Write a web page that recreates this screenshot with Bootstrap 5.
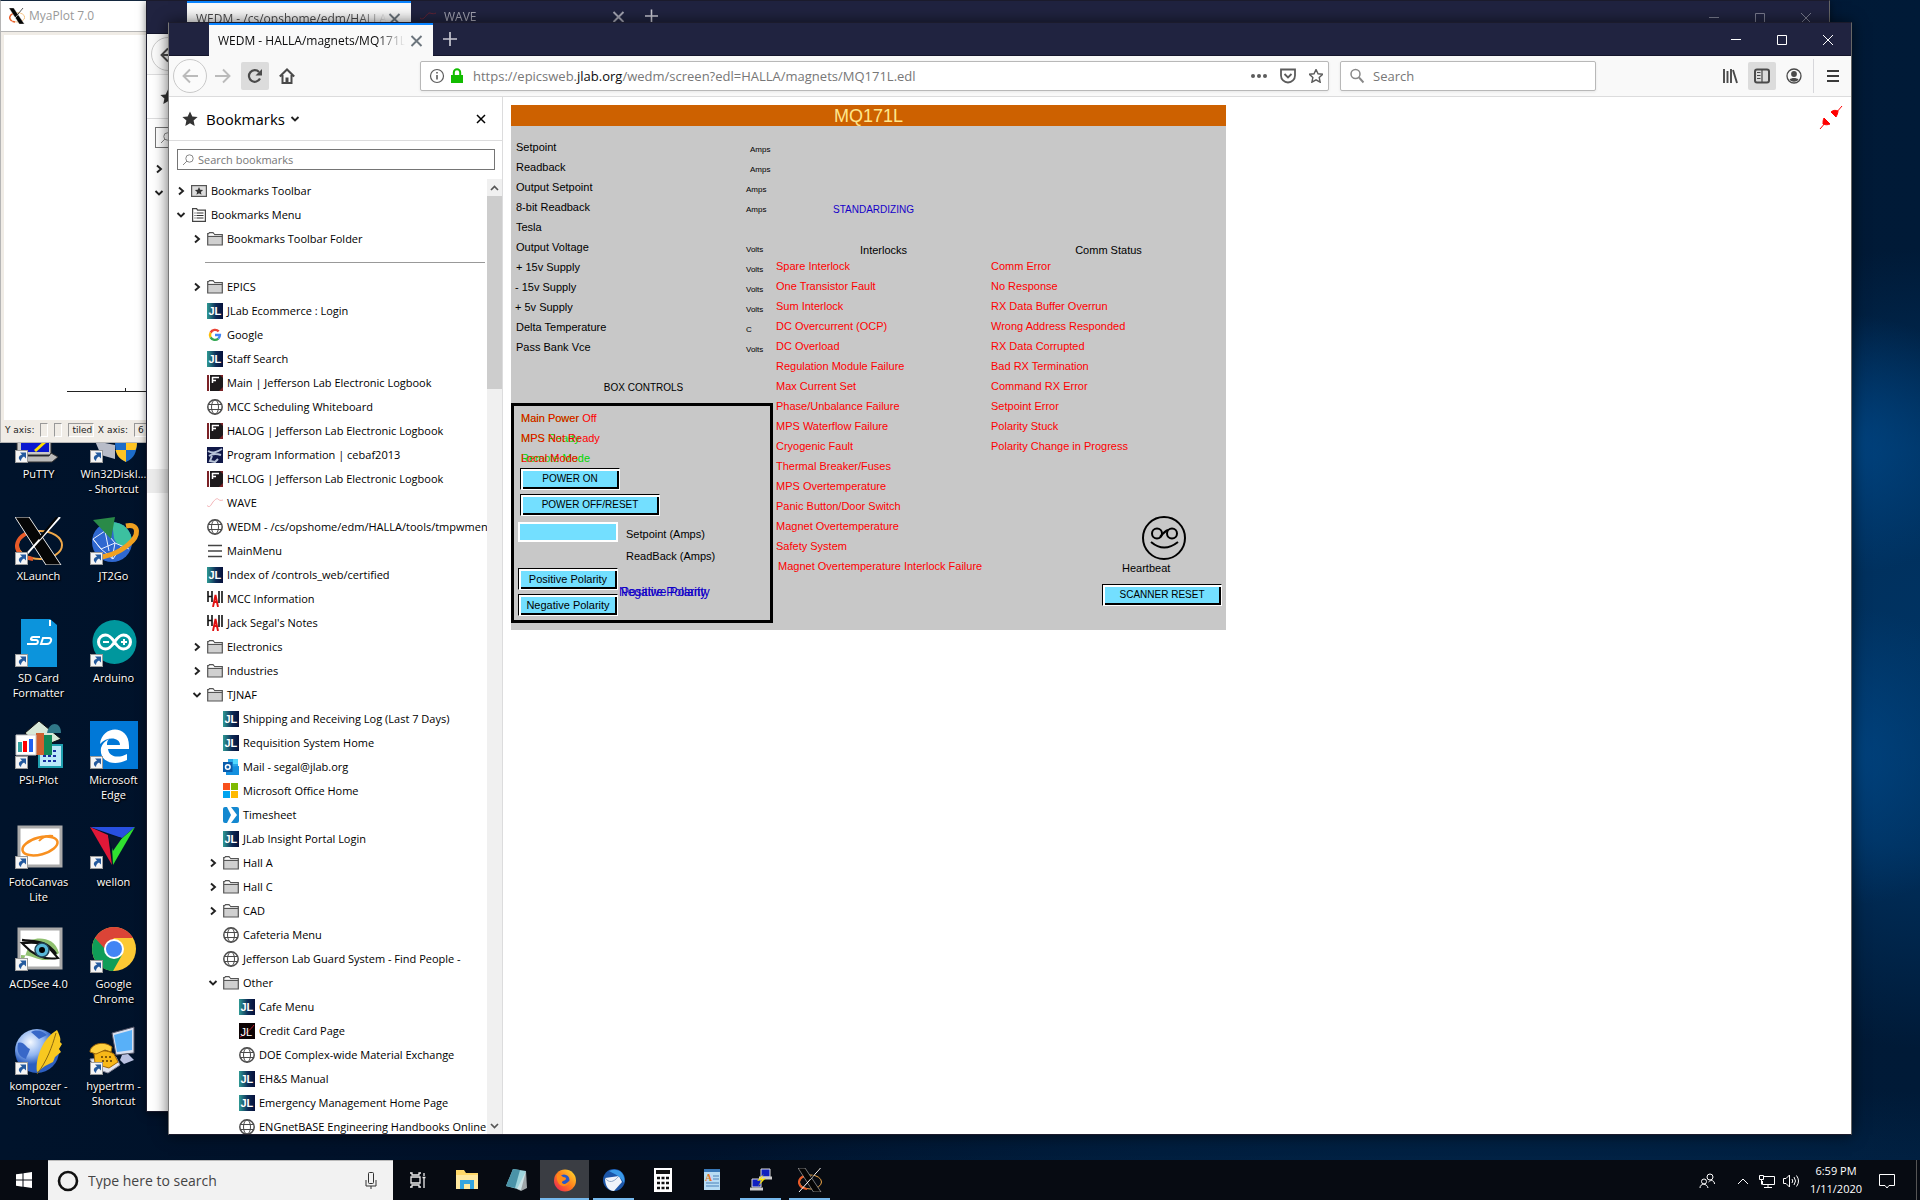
<!DOCTYPE html>
<html lang="en">
<head>
<meta charset="utf-8">
<meta name="viewport" content="width=device-width, initial-scale=1">
<title>WEDM - HALLA/magnets/MQ171L</title>
<link href="https://cdn.jsdelivr.net/npm/bootstrap@5.3.0/dist/css/bootstrap.min.css" rel="stylesheet">
<style>
  :root { --ui: "Open Sans", "Noto Sans", sans-serif; --edm: "Liberation Sans", Arial, sans-serif; }
  body { font-family: var(--ui); font-size: 11px; line-height: 16px; color: #000; }
  button { font: inherit; color: inherit; }
  .desktop {
    height: 100vh; overflow: hidden; position: relative;
    background:
      radial-gradient(ellipse 160px 130px at 96% 37%, rgba(0,74,140,.75) 0, rgba(0,74,140,0) 100%),
      radial-gradient(ellipse 160px 150px at 96% 63%, rgba(0,74,140,.7) 0, rgba(0,74,140,0) 100%),
      radial-gradient(ellipse 320px 400px at 100% 54%, #003362 0, #002f5c 50%, rgba(0,47,92,0) 100%),
      radial-gradient(ellipse 900px 120px at 80% 100%, rgba(2,42,82,.8) 0, rgba(2,42,82,0) 100%),
      linear-gradient(90deg, #00132b 0, #001129 30%, #001834 60%, #001a37 100%);
  }
  .no-ui { background: none; border: 0; padding: 0; }

  /* desktop shortcuts */
  .shortcuts { display: grid; grid-template-columns: 75px 75px; grid-auto-rows: 102px; padding: 415px 0 0 1px; width: 151px; }
  .shortcut { color: #fff; text-decoration: none; text-align: center; line-height: 15px; text-shadow: 0 1px 2px #000, 1px 1px 1px #000; position: relative; white-space: nowrap; }
  .shortcut svg { display: block; margin: 0 auto 3px; overflow: visible; }

  /* windows */
  .win { position: absolute; display: flex; flex-direction: column; overflow: hidden; }
  .plotwin { left: 0; top: 0; width: 148px; height: 443px; background: #f0ece6; border: 1px solid #b5b5b5; border-top: 1px solid #14283f; }
  .plot-title { height: 31px; background: #fff; color: #999; font-size: 12px; border-bottom: 1px solid #b5b5b5; }
  .plot-area { margin: 3px 0 0 3px; background: #fff; }
  .plot-status { height: 22px; padding-bottom: 2px; font-family: "DejaVu Sans", sans-serif; font-size: 9px; line-height: 12px; color: #222; white-space: nowrap; overflow: hidden; }
  .sunk { border: 1px solid #999; border-right-color: #fff; border-bottom-color: #fff; height: 14px; min-width: 7px; padding: 0 3px; margin-left: 2px; }
  .ff { background: #fff; border: 1px solid #1b1b2c; border-right-color: #666; }
  .ff-back { left: 146px; right: 90px; top: 0; bottom: 88px; box-shadow: 0 2px 8px rgba(0,0,0,.5); }
  .ff-front { left: 168px; right: 68px; top: 22px; bottom: 65px; box-shadow: 0 0 14px rgba(0,0,0,.6); border-left-color: #777; }
  .titlebar { height: 33px; background: #202340; border-bottom: 1px solid #14162c; color: #d0d0da; flex: none; }
  .tab { width: 224px; height: 33px; padding: 0 8px 0 9px; font-size: 12px; }
  .tab-on { background: #f9f9f9; color: #0c0c0d; border-top: 2px solid #0a84ff; }
  .tab-text { flex: 1; overflow: hidden; white-space: nowrap; -webkit-mask-image: linear-gradient(90deg, #000 85%, transparent); mask-image: linear-gradient(90deg, #000 85%, transparent); }
  .lead-gap { width: 40px; }
  .capbtn { width: 46px; height: 32px; }
  .toolbar { height: 41px; background: #f9f9f9; border-bottom: 1px solid #dcdcdd; flex: none; color: #4a4a4a; }
  .toolbar .faint { color: #bbb; }
  .round-btn { width: 34px; height: 34px; border: 1px solid #c9c9c9; border-radius: 50%; background: #fbfbfb; }
  .tool { width: 28px; height: 28px; border-radius: 2px; }
  .tool-on { background: #dcdcdc; }
  .tight { margin-left: 2px; }
  .field { height: 30px; border: 1px solid #b8b8b8; border-radius: 2px; background: #fff; box-shadow: 0 1px 3px rgba(0,0,0,.08); }
  .field input { border: 0; outline: 0; font-size: 13px; color: #555; background: none; width: 100%; padding: 0; }
  .url { flex: 1; font-size: 13px; color: #777; white-space: nowrap; }
  .url b { font-weight: 400; color: #0c0c0d; }
  .search-field { width: 256px; margin-left: 11px; }
  .spring-l { width: 119px; }
  .spring-r { width: 120px; }
  .vline { width: 1px; height: 34px; background: #d7d7db; margin: 0 1px 0 5px; }

  .side { width: 334px; border-right: 1px solid #dcdcdd; flex: none; }
  .side-head { height: 44px; border-bottom: 1px solid #dcdcdd; font-size: 15px; padding: 0 15px 0 9px; flex: none; }
  .side-search { height: 21px; margin: 8px 7px 9px 8px; border: 1px solid #757575; flex: none; }
  .side-search input { border: 0; outline: 0; background: none; padding: 0 0 0 4px; font-size: 11px; flex: 1; line-height: 17px; }
  .side-search input::placeholder, .field input::placeholder { color: #777; opacity: 1; }
  .tree { list-style: none; margin: 0; padding: 0; overflow: hidden; flex: 1; min-width: 0; }
  .tree li { height: 24px; display: flex; align-items: center; padding-left: 6px; white-space: nowrap; overflow: hidden; }
  .tree .l1 { padding-left: 22px; } .tree .l2 { padding-left: 38px; } .tree .l3 { padding-left: 54px; }
  .tree a { color: #000; text-decoration: none; display: flex; align-items: center; gap: 4px; }
  .tree svg { flex: none; }
  .twisty { width: 12px; height: 12px; margin-right: 4px; display: flex; flex: none; }
  .tree .divide { padding: 0 2px 2px 36px; }
  .divide hr { flex: 1; margin: 0; border-top: 1px solid #999; opacity: 1; }
  .tree .hot { background: #ececec; }
  .scroller { width: 15px; background: #f0f0f0; flex: none; }
  .scroller button { height: 17px; }
  .thumb { height: 193px; background: #cdcdcd; }

  /* control screen */
  .page { padding: 8px; }
  .edm { width: 715px; min-height: 525px; display: flex; flex-direction: column; background: #c8c8c8; font-family: var(--edm); font-size: 11px; line-height: 20px; align-self: flex-start; }
  .edm-title { height: 21px; background: #cd6100; color: #ffe68c; font-size: 18px; line-height: 22px; text-align: center; margin: 0; font-weight: 400; }
  .edm-left { width: 265px; padding-top: 11px; }
  .edm-mid { width: 215px; padding-top: 74px; }
  .edm-right { flex: 1; padding-top: 118px; }
  .caps { font-size: 10px; }
  .sig { height: 20px; padding-left: 5px; }
  .sig .unit { width: 30px; font-size: 8px; padding-top: 3px; }
  .sig .unit-far { width: 26px; }
  .colhead { line-height: 12px; text-align: center; }
  .alarm { color: #f00; white-space: nowrap; }
  .std { color: #1400c8; padding-left: 57px; }
  .ctl-title { padding-top: 21px; }
  .ctl { width: 262px; height: 220px; border: 3px solid #000; margin-top: 5px; padding: 2px 3px 0 4px; }
  .edm-btn { display: block; width: 100px; height: 22px; padding: 0; background: #73dfff; border: 1px solid #000; border-right-color: #fff; border-bottom-color: #fff; border-radius: 0; box-shadow: inset 2px 2px #fff, inset -2px -2px #000; line-height: 18px; color: #000; }
  .w140 { width: 140px; } .w120 { width: 120px; }
  .inset { margin-left: 2px; }
  .stack { position: relative; height: 20px; padding-left: 3px; white-space: nowrap; }
  .stack .under { position: absolute; left: 3px; top: 0; color: #00d800; }
  .stack .over { position: relative; color: #f00; }
  .pol { font-size: 12px; width: 100px; }
  .pol .under { left: 1px; color: #1000c8; } .pol .over { color: #1000c8; }
  .set-row { padding-top: 6px; line-height: 24px; }
  .setbox { width: 100px; height: 20px; border: 2px solid #fff; background: #73dfff; padding: 0; border-radius: 0; }
  .pol-row { padding-top: 2px; }
  .beat { width: 112px; line-height: 16px; }

  /* taskbar */
  .taskbar { position: absolute; left: 0; right: 0; bottom: 0; height: 40px; background: #070b12; color: #fff; }
  .tb { width: 49px; height: 40px; position: relative; display: flex; align-items: center; justify-content: center; }
  .tb-run::after { content: ""; position: absolute; left: 4px; right: 4px; bottom: 0; height: 2px; background: #76b9ed; }
  .tb-on { background: #3a3d43; } .tb-on::after { left: 0; right: 0; }
  .start { width: 48px; }
  .tb-search { width: 345px; height: 40px; background: #f2f2f2; border-top: 1px solid #bbb; }
  .tb-search input { border: 0; outline: 0; background: none; font-size: 14px; flex: 1; padding: 0; }
  .tb-search input::placeholder { color: #444; opacity: 1; }
  .tray { width: 24px; height: 40px; }
  .clock { width: 66px; text-align: center; line-height: 18px; }
  .notif { width: 36px; height: 40px; }
  .peek { width: 1px; height: 40px; background: #555; margin: 0 3px 0 11px; }
</style>
</head>
<body>

<svg width="0" height="0" class="position-absolute" aria-hidden="true">
  <defs>
    <linearGradient id="g-jl"><stop offset="0" stop-color="#2f9a94"/><stop offset=".55" stop-color="#0d2c58"/><stop offset="1" stop-color="#06103a"/></linearGradient>
    <linearGradient id="g-ff" x1="1" y1="0" x2="0" y2="1"><stop offset="0" stop-color="#ffe52e"/><stop offset=".5" stop-color="#ff7b1c"/><stop offset="1" stop-color="#e8185f"/></linearGradient>
    <radialGradient id="g-globe" cx=".35" cy=".3"><stop offset="0" stop-color="#f4f9ff"/><stop offset=".6" stop-color="#8fb4f0"/><stop offset="1" stop-color="#2d5fc0"/></radialGradient>
    <symbol id="closed" viewBox="0 0 12 12"><path d="M4 2.500 8 6 4 9.500" fill="none" stroke="#222" stroke-width="1.900"/></symbol>
    <symbol id="opened" viewBox="0 0 12 12"><path d="M2.500 4 6 7.500 9.500 4" fill="none" stroke="#222" stroke-width="1.900"/></symbol>
    <symbol id="folder" viewBox="0 0 16 16"><path d="M.7 14V2.500h1l.8-1h3.500l1.500 2h7.800V14z" fill="#d0d0d0" stroke="#555" stroke-width="1.200"/><path d="M1 5.500h14.500" stroke="#555"/><path d="M2.500 3h4l1 1.500h-6z" fill="#fff"/></symbol>
    <symbol id="barfolder" viewBox="0 0 16 16"><rect x=".6" y="2.600" width="14.800" height="10.800" fill="#ddd" stroke="#555" stroke-width="1.200"/><path d="m8 4 1.200 2.700 2.900.3-2.200 1.900.6 2.900L8 10.300l-2.500 1.500.6-2.900L3.900 7l2.900-.3z" fill="#333"/></symbol>
    <symbol id="menufolder" viewBox="0 0 16 16"><path d="M1.600 14.400V1.600h4l1 1.500h7.800v11.300z" fill="#fff" stroke="#444" stroke-width="1.200"/><path d="M3.500 6h1m1 0h7M3.500 8.500h1m1 0h7M3.500 11h1m1 0h7" stroke="#333" stroke-width="1.200"/></symbol>
    <symbol id="jl" viewBox="0 0 16 16"><rect width="16" height="16" fill="url(#g-jl)"/><text x="1.500" y="11.500" font-family="Liberation Sans" font-weight="700" font-size="11" fill="#fff">JL</text></symbol>
    <symbol id="jlblack" viewBox="0 0 16 16"><rect width="16" height="16" fill="#0c0304"/><path d="M1 14C6 12 12 6 15 2" stroke="#c0182a" fill="none"/><text x="1.500" y="12.500" font-family="Liberation Sans" font-size="11" fill="#fff">JL</text></symbol>
    <symbol id="google" viewBox="0 0 16 16"><g fill="none" stroke-width="2.400"><path d="M11.700 4.400A5 5 0 0 0 3.600 5.600" stroke="#ea4335"/><path d="M3.600 5.600a5 5 0 0 0 0 4.800" stroke="#fbbc05"/><path d="M3.600 10.400a5 5 0 0 0 7.700 1.200" stroke="#34a853"/><path d="M11.300 11.600A5 5 0 0 0 12.900 8H8" stroke="#4285f4"/></g></symbol>
    <symbol id="logbook" viewBox="0 0 16 16"><rect width="16" height="16" fill="#1d1a1c"/><path d="M0 0h2v16H0zM13 0h3v3zM16 12v4h-4z" fill="#7c2226"/><path d="M2.500 0v16" stroke="#fff"/><path d="M5 2.500h7M5 5.500h4M5.500 2v6" stroke="#fff" stroke-width="1.500"/></symbol>
    <symbol id="web" viewBox="0 0 16 16"><g fill="none" stroke="#4b4b4b"><circle cx="8" cy="8" r="7.200" stroke-width="1.500"/><ellipse cx="8" cy="8" rx="3.500" ry="7"/><path d="M1 5.500h14M1 10.500h14"/></g></symbol>
    <symbol id="cebaf" viewBox="0 0 16 16"><rect width="16" height="16" fill="#101848"/><path d="M1 4c5 3 9 1 14-2M2 9c4-3 9-2 12-1M5 9l-2 5 5 1 3-3" stroke="#b8c4d8" stroke-width="2" fill="none"/></symbol>
    <symbol id="wave" viewBox="0 0 16 16"><path d="M0 10.500c3 3 4-1 6-3.500s4-4 5-3 2 2 5 1" stroke="#f5b5b8" fill="none"/></symbol>
    <symbol id="bars" viewBox="0 0 16 16"><path d="M1 2.500h14M1 8h14M1 13.500h14" stroke="#444" stroke-width="1.300"/></symbol>
    <symbol id="hall" viewBox="0 0 16 16"><path d="M1 0v11M5 0v11M1 5.500h4M12 0v12M15 0v12" stroke="#111" stroke-width="1.600"/><path d="M6 16 8.500 4 11 16M7 11h3" stroke="#e01010" stroke-width="1.900" fill="none"/></symbol>
    <symbol id="outlook" viewBox="0 0 16 16"><path d="M5 0h10v9H5z" fill="#28a8ea"/><path d="M10 0h5v5h-5z" fill="#50d9ff"/><path d="M3 8l13-1v9H3z" fill="#1490df"/><path d="M0 3h9.500v10H0z" fill="#0a5dad"/><circle cx="4.800" cy="8" r="2.300" fill="none" stroke="#fff" stroke-width="1.500"/></symbol>
    <symbol id="ms" viewBox="0 0 16 16"><path d="M0 0h7v7H0z" fill="#f8501c"/><path d="M8 0h7v7H8z" fill="#7fba00"/><path d="M0 8h7v7H0z" fill="#00a4ef"/><path d="M8 8h7v7H8z" fill="#ffb900"/></symbol>
    <symbol id="timesheet" viewBox="0 0 16 16"><rect width="16" height="16" rx="2" fill="#1488d0"/><path d="m4 0 4 8-4 8h4l6-8-6-8z" fill="#fff"/></symbol>
    <symbol id="star" viewBox="0 0 16 16"><path d="m8 .5 2.300 4.900 5.300.6-4 3.600 1.100 5.400L8 12.300 3.300 15l1.100-5.400L.4 6l5.300-.6z"/></symbol>
    <symbol id="x" viewBox="0 0 12 12"><path d="m2 2 8 8m0-8-8 8" stroke="currentColor" stroke-width="1.500"/></symbol>
    <symbol id="plus" viewBox="0 0 14 14"><path d="M7 0v14M0 7h14" stroke="#c8c8d2" stroke-width="1.700"/></symbol>
    <symbol id="back" viewBox="0 0 16 16"><path d="M16 8H1.500M8 1.500 1.500 8 8 14.500" fill="none" stroke="currentColor" stroke-width="1.900"/></symbol>
    <symbol id="glass" viewBox="0 0 16 16"><circle cx="6.500" cy="6" r="4.500" fill="none" stroke="currentColor" stroke-width="1.500"/><path d="m10 9.500 4.500 5" stroke="currentColor" stroke-width="1.900"/></symbol>
    <symbol id="glass-l" viewBox="0 0 12 12"><circle cx="7.500" cy="4.500" r="3.700" fill="none" stroke="#888"/><path d="M5 7 1 11" stroke="#888"/></symbol>
    <symbol id="min" viewBox="0 0 10 10"><path d="M0 4.500h10" stroke="currentColor"/></symbol>
    <symbol id="max" viewBox="0 0 10 10"><path d="M.5.5h9v9h-9z" fill="none" stroke="currentColor"/></symbol>
    <symbol id="cls" viewBox="0 0 10 10"><path d="m0 0 10 10M10 0 0 10" stroke="currentColor"/></symbol>
    <symbol id="lnk" viewBox="0 0 13 13"><rect x=".5" y=".5" width="12" height="12" fill="#f5f5f5" stroke="#999"/><path d="M5 2.500h6v6l-2-2c-2 1-3 2.500-3 4.500-3-2-3-5 1-6.500z" fill="#245a9e"/></symbol>
    <symbol id="xlogo" viewBox="0 0 48 48"><ellipse cx="25" cy="28" rx="22" ry="14" fill="none" stroke="#f0a848" stroke-width="2"/><path d="M12 16C-4 24 0 40 18 42" stroke="#e85a28" stroke-width="4" fill="none"/><path d="M0 0h14l32 48H31z" fill="#050505" stroke="#e8e8e8" stroke-width="1"/><path d="M45 0 2 48" stroke="#fff" stroke-width="2"/><path d="M42 0 24 22" stroke="#050505" stroke-width="2"/></symbol>
    <symbol id="pc" viewBox="0 0 48 48"><path d="M2 6h34v34H2z" fill="#c8c8c8" stroke="#333"/><path d="M6 10h28v27H6z" fill="#0a18d0"/><path d="m20 36 11-10" stroke="#ffe000" stroke-width="3"/><path d="m36 38 7 4-6 5H8l2-6h24z" fill="#bbb" stroke="#333"/></symbol>
  </defs>
</svg>

<div class="desktop">

  <nav class="shortcuts" aria-label="Desktop shortcuts">
    <a href="#" class="shortcut"><svg width="48" height="48"><use href="#pc" width="48" height="48"/><use href="#lnk" y="35" width="13" height="13"/></svg>PuTTY</a>
    <a href="#" class="shortcut"><svg width="48" height="48"><path d="m5 26 20 4v14l-14-4z" fill="#b8bcc8"/><path d="M25 26h22c0 12-3 17-11 21-8-4-11-9-11-21z" fill="#1d6cc8"/><path d="M36 26h11c0 5-.5 7-1.500 9H36zM25.500 35H36v12c-6-3-9-6-10.500-12z" fill="#ffc423"/><use href="#lnk" y="35" width="13" height="13"/></svg>Win32DiskI...<br>- Shortcut</a>
    <a href="#" class="shortcut"><svg width="48" height="48"><use href="#xlogo" width="48" height="48"/><use href="#lnk" y="35" width="13" height="13"/></svg>XLaunch</a>
    <a href="#" class="shortcut"><svg width="48" height="48"><circle cx="22" cy="25" r="20" fill="#2f68d0"/><path d="M22 5a20 20 0 0 1 20 20c-8 8-16 3-18-4z" fill="#3cc0a0"/><path d="M3 22l12-8 10 12-14 6zM11 32l12 10 8-12M15 14l4 20M25 26l-3 16M3 22l8 10M25 26l14 6" stroke="#e8f0ff" fill="none"/><path d="M36 9c14-3 13 10 3 18-10 9-24 14-34 13" stroke="#f0a020" stroke-width="5" fill="none"/><path d="M3 3 25 0l-4 22z" fill="#2a8a48"/><use href="#lnk" y="35" width="13" height="13"/></svg>JT2Go</a>
    <a href="#" class="shortcut"><svg width="48" height="48"><path d="M6 0h29l7 6v42H6z" fill="#0c94dc"/><path d="M35 1v6" stroke="#fff" stroke-width="2"/><path d="M12 25h9c2 0 3-4 0-4h-4c-2 0-1-3 1-3h7M26 25l2-6h6c4 0 2 6-2 6z" fill="none" stroke="#fff" stroke-width="2"/><use href="#lnk" y="35" width="13" height="13"/></svg>SD Card<br>Formatter</a>
    <a href="#" class="shortcut"><svg width="48" height="48"><circle cx="24.500" cy="23" r="22" fill="#00979d"/><path d="M24.500 23c-4-6-6-7-9-7a7 7 0 0 0 0 14c3 0 5-1 9-7s6-7 9-7a7 7 0 0 1 0 14c-3 0-5-1-9-7z" fill="none" stroke="#fff" stroke-width="3"/><path d="M13 23h6M31 23h6M34 20v6" stroke="#fff" stroke-width="2"/><use href="#lnk" y="35" width="13" height="13"/></svg>Arduino</a>
    <a href="#" class="shortcut"><svg width="48" height="48"><path d="m24 0 22 18-20 8-16-14z" fill="#d8e8d8" stroke="#111"/><path d="M32 12C34 0 46 0 46 12z" fill="#307888"/><path d="M24 24h23v22H24z" fill="#bce8f8" stroke="#20a0b0" stroke-width="2"/><path d="M28 30h15M28 35h15M28 40h15" stroke="#1830a0" stroke-width="2" stroke-dasharray="3 2"/><path d="M21 12h8v22h-8z" fill="#d06030"/><path d="M29 14h8v20h-8z" fill="#108858"/><path d="M1 14h20v20H1z" fill="#fff" stroke="#c8c8c8"/><path d="M3 21h4v10H3z" fill="#30a0a0"/><path d="M8 20h4v11H8z" fill="#f00"/><path d="M14 18h4v13h-4z" fill="#2060f0"/><use href="#lnk" y="35" width="13" height="13"/></svg>PSI-Plot</a>
    <a href="#" class="shortcut"><svg width="48" height="48"><rect width="48" height="48" fill="#0078d7"/><path d="M10 23c2-19 29-20 29 2v3H18c1 9 12 9 19 5v6c-14 7-28 1-26-12 1-4 4-7 8-9-2 2-2 4-2 6h13c0-8-13-9-20-1z" fill="#fff"/><use href="#lnk" y="35" width="13" height="13"/></svg>Microsoft<br>Edge</a>
    <a href="#" class="shortcut"><svg width="48" height="48"><rect x="4" y="4" width="42" height="39" fill="#fff" stroke="#aaa" stroke-width="3"/><ellipse cx="25" cy="23" rx="18" ry="8.500" transform="rotate(-15 25 23)" fill="none" stroke="#f89020" stroke-width="2.500"/><path d="M24 18c4-5 10-6 14-5" stroke="#f89020" stroke-width="2" fill="none"/><use href="#lnk" y="33" width="13" height="13"/></svg>FotoCanvas<br>Lite</a>
    <a href="#" class="shortcut"><svg width="48" height="48"><path d="M0 4h45L32 15z" fill="#2850e0"/><path d="M0 4l18 8 4 30z" fill="#e01838"/><path d="M45 4 23 42l-1-18z" fill="#30e030"/><path d="m18 12 14 3-9 13z" fill="#081830"/><use href="#lnk" y="33" width="13" height="13"/></svg>wellon</a>
    <a href="#" class="shortcut"><svg width="48" height="48"><rect x="4" y="4" width="42" height="39" fill="#fff" stroke="#aaa" stroke-width="3"/><path d="M6 42V30c12 0 20 8 30 4l8-6C40 12 24 12 16 15z" fill="#90c070"/><path d="M7 18c10 0 20-2 28 6l8 9c-12 2-24-2-34-13z" fill="#fff" stroke="#111" stroke-width="2"/><path d="M7 15c14 2 24 0 34 14" stroke="#111" stroke-width="2.500" fill="none"/><circle cx="27" cy="25" r="7" fill="#58b8d8" stroke="#245" stroke-width="1.500"/><circle cx="27" cy="25" r="3"/><use href="#lnk" y="33" width="13" height="13"/></svg>ACDSee 4.0</a>
    <a href="#" class="shortcut"><svg width="48" height="48"><circle cx="24" cy="24" r="22" fill="#fcc934"/><path d="M24 13h19a22 22 0 0 0-38 0l9 12z" fill="#db4437"/><path d="M5 13a22 22 0 0 0 18 33l9-16-8-2-9-4z" fill="#0f9d58"/><circle cx="24" cy="24" r="10" fill="#fff"/><circle cx="24" cy="24" r="8" fill="#4285f4"/><use href="#lnk" y="35" width="13" height="13"/></svg>Google<br>Chrome</a>
    <a href="#" class="shortcut"><svg width="48" height="48"><circle cx="22" cy="24" r="22" fill="url(#g-globe)"/><path d="M3 16c6-2 7 4 12 6-2 6-3 6-4 10C4 30 1 24 3 16zM16 5c6-3 12-1 16 3l-8 4z" fill="#3868c8"/><path d="M42 3c3 6 4 9 3 12l2 2-3 5 2 3-6 5-2 5-8 4-8 6c-2-14 6-34 20-42z" fill="#f8c820"/><path d="M41 6C37 20 32 34 22 47" stroke="#8a6810" fill="none"/><use href="#lnk" y="35" width="13" height="13"/></svg>kompozer -<br>Shortcut</a>
    <a href="#" class="shortcut"><svg width="48" height="48"><path d="m22 6 22-6v26l-18 2z" fill="#d8e0f0" stroke="#556"/><path d="m24 8 18-5v20l-15 2z" fill="#58b0f8"/><path d="m32 28 6-1 6 6-10 4-4-4z" fill="#b8c0e0"/><path d="M0 32l26-2 4 8-12 8-14-5z" fill="#e0e4f0" stroke="#889"/><path d="M4 26c6-3 14-3 20 1l4 8-9 6-14-4z" fill="#f8b818" stroke="#a06808"/><path d="M0 25c0-8 14-12 22-5l-1 5-6-2-9 4z" fill="#ffd040" stroke="#a06808"/><path d="M11 30h10M12 34h10" stroke="#805808" stroke-width="2" stroke-dasharray="2 2"/><use href="#lnk" y="35" width="13" height="13"/></svg>hypertrm -<br>Shortcut</a>
  </nav>

  <!-- plot window -->
  <section class="win plotwin" aria-label="MyaPlot 7.0">
    <div class="plot-title d-flex align-items-center"><svg width="16" height="16" class="ms-2 me-1"><use href="#xlogo" width="16" height="16"/></svg>MyaPlot 7.0</div>
    <div class="plot-area flex-fill d-flex align-items-end justify-content-end"><svg width="80" height="32"><path d="M0 3.500h80M58.500 0v4" stroke="#222"/></svg></div>
    <div class="plot-status d-flex align-items-center ps-1 gap-1"><span>Y axis:</span><span class="sunk"></span><span class="sunk"></span><span class="sunk">tiled</span><span>X axis:</span><span class="sunk">6</span></div>
  </section>

  <!-- browser window behind -->
  <section class="win ff ff-back" aria-label="Firefox, WEDM tools">
    <header class="titlebar d-flex">
      <span class="lead-gap"></span>
      <div class="tab tab-on d-flex align-items-start pt-2"><span class="tab-text opacity-75">WEDM - /cs/opshome/edm/HALLA/tools</span><svg width="16" height="16" class="text-secondary"><use href="#x" width="15" height="16"/></svg></div>
      <div class="tab d-flex align-items-start pt-2 opacity-75"><svg width="16" height="16" class="me-2"><path d="M0 9c4 4 7-6 10-5s4 1 6 0" stroke="#7c2430" fill="none"/></svg><span class="tab-text">WAVE</span><svg width="16" height="16"><use href="#x" width="15" height="16"/></svg></div>
      <svg width="16" height="14" class="ms-2 mt-2"><use href="#plus" x="2" width="13" height="14"/></svg>
      <div class="ms-auto d-flex opacity-50">
        <button class="no-ui capbtn" aria-label="Minimize"><svg width="10" height="10"><use href="#min"/></svg></button>
        <button class="no-ui capbtn" aria-label="Maximize"><svg width="10" height="10"><use href="#max"/></svg></button>
        <button class="no-ui capbtn" aria-label="Close"><svg width="10" height="10"><use href="#cls"/></svg></button>
      </div>
    </header>
    <div class="toolbar d-flex align-items-center ps-1"><button class="no-ui round-btn" aria-label="Back"><svg width="16" height="16"><use href="#back"/></svg></button></div>
    <div class="side d-flex flex-column flex-fill">
      <div class="side-head d-flex align-items-center"><svg width="16" height="16" class="ms-1" fill="#333"><use href="#star"/></svg></div>
      <div class="side-search d-flex align-items-center ps-1"><svg width="12" height="12"><use href="#glass-l"/></svg></div>
      <ul class="tree">
        <li><span class="twisty"><svg width="12" height="12"><use href="#closed"/></svg></span></li>
        <li><span class="twisty"><svg width="12" height="12"><use href="#opened"/></svg></span></li>
        <li></li><li></li><li></li><li></li><li></li><li></li><li></li><li></li><li></li><li></li><li></li>
        <li class="hot"></li>
      </ul>
    </div>
  </section>

  <!-- browser window in front -->
  <main class="win ff ff-front">
    <header class="titlebar d-flex">
      <span class="lead-gap"></span>
      <div class="tab tab-on d-flex align-items-center"><span class="tab-text">WEDM - HALLA/magnets/MQ171L.edl</span><button class="no-ui d-flex ps-1 text-secondary" aria-label="Close tab"><svg width="16" height="16"><use href="#x" width="15" height="16"/></svg></button></div>
      <button class="no-ui d-flex align-items-center px-2" aria-label="New tab"><svg width="18" height="14"><use href="#plus" x="2" width="14" height="14"/></svg></button>
      <div class="ms-auto d-flex text-white">
        <button class="no-ui capbtn" aria-label="Minimize"><svg width="10" height="10"><use href="#min"/></svg></button>
        <button class="no-ui capbtn" aria-label="Maximize"><svg width="10" height="10"><use href="#max"/></svg></button>
        <button class="no-ui capbtn" aria-label="Close"><svg width="10" height="10"><use href="#cls"/></svg></button>
      </div>
    </header>

    <div class="toolbar d-flex align-items-center">
      <button class="no-ui round-btn faint ms-1 d-flex align-items-center justify-content-center" aria-label="Back"><svg width="16" height="16"><use href="#back"/></svg></button>
      <button class="no-ui tool faint tight d-flex align-items-center justify-content-center" aria-label="Forward"><svg width="16" height="16"><use href="#back" transform="matrix(-1 0 0 1 16 0)"/></svg></button>
      <button class="no-ui tool tool-on ms-1 d-flex align-items-center justify-content-center" aria-label="Reload"><svg width="16" height="16"><path d="M13 10.500A5.800 5.800 0 1 1 12 4" fill="none" stroke="#4a4a4a" stroke-width="2.200"/><path d="M15 1v6.500H8.500z" fill="#4a4a4a"/></svg></button>
      <button class="no-ui tool ms-1 d-flex align-items-center justify-content-center" aria-label="Home"><svg width="16" height="16"><path d="M.8 8.500 8 1.500l7.200 7M3.500 7v8h9V7" fill="none" stroke="#4a4a4a" stroke-width="2"/><path d="M6.500 9.500h3V15h-3z" fill="#4a4a4a"/></svg></button>
      <span class="spring-l flex-shrink-1"></span>
      <div class="field flex-fill d-flex align-items-center ps-2 pe-1 gap-1">
        <svg width="16" height="16"><circle cx="8" cy="8" r="6.500" fill="none" stroke="#5c5c5c" stroke-width="1.200"/><path d="M8 7v4.500M8 4v1.500" stroke="#5c5c5c" stroke-width="1.600"/></svg>
        <svg width="16" height="16"><path d="M2 7h12v8H2z" fill="#12bc00"/><path d="M4.800 8V4.500a3.200 3.200 0 0 1 6.400 0V8" fill="none" stroke="#12bc00" stroke-width="2"/></svg>
        <span class="url ps-1">https://epicsweb.<b>jlab.org</b>/wedm/screen?edl=HALLA/magnets/MQ171L.edl</span>
        <button class="no-ui d-flex me-2" aria-label="Page actions"><svg width="18" height="16" fill="#5c5c5c"><circle cx="3" cy="8" r="2"/><circle cx="9" cy="8" r="2"/><circle cx="15" cy="8" r="2"/></svg></button>
        <button class="no-ui d-flex me-2" aria-label="Save to Pocket"><svg width="16" height="16" fill="none" stroke="#5c5c5c" stroke-width="1.800"><path d="M1 1.500h14v6a7 7 0 0 1-14 0z"/><path d="m4.500 6 3.500 3.500L11.500 6"/></svg></button>
        <button class="no-ui d-flex" aria-label="Bookmark this page"><svg width="16" height="16" fill="none" stroke="#5c5c5c" stroke-width="1.600"><use href="#star" transform="translate(1 1) scale(.88)"/></svg></button>
      </div>
      <label class="field search-field d-flex align-items-center ps-2"><svg width="16" height="16" class="me-2 flex-shrink-0" color="#888"><use href="#glass"/></svg><input type="text" placeholder="Search" aria-label="Search the web"></label>
      <span class="spring-r"></span>
      <button class="no-ui tool d-flex align-items-center justify-content-center" aria-label="Library"><svg width="16" height="16"><path d="M2 1v14M5.500 3v12M9 1v14M11 2l4 13" stroke="#4a4a4a" stroke-width="1.900"/></svg></button>
      <button class="no-ui tool tool-on ms-1 d-flex align-items-center justify-content-center" aria-label="Sidebars"><svg width="16" height="16"><rect x="1" y="1.500" width="14" height="13" rx="2" fill="none" stroke="#4a4a4a" stroke-width="2"/><path d="M8 1v14M3 4.500h3.500M3 7.500h3.500M3 10.500h3.500" stroke="#4a4a4a" stroke-width="1.200"/></svg></button>
      <button class="no-ui tool ms-1 d-flex align-items-center justify-content-center" aria-label="Account"><svg width="16" height="16"><circle cx="8" cy="8" r="7" fill="none" stroke="#4a4a4a" stroke-width="1.300"/><circle cx="8" cy="6" r="2.900" fill="#4a4a4a"/><path d="M3.500 11.500c2-2 7-2 9 0-2 3-7 3-9 0z" fill="#4a4a4a"/></svg></button>
      <span class="vline"></span>
      <button class="no-ui tool mx-1 d-flex align-items-center justify-content-center" aria-label="Menu"><svg width="16" height="16"><path d="M2 3h12M2 8h12M2 13h12" stroke="#3a3a3a" stroke-width="2"/></svg></button>
    </div>

    <div class="d-flex flex-fill overflow-hidden">
      <aside class="side d-flex flex-column">
        <div class="side-head d-flex align-items-center">
          <svg width="16" height="16" class="ms-1" fill="#333"><use href="#star"/></svg>
          <button class="no-ui d-flex align-items-center gap-1 ms-2">Bookmarks<svg width="12" height="12"><use href="#opened"/></svg></button>
          <button class="no-ui d-flex ms-auto" aria-label="Close sidebar"><svg width="12" height="12"><use href="#x"/></svg></button>
        </div>
        <label class="side-search d-flex align-items-center ps-1"><svg width="12" height="12"><use href="#glass-l"/></svg><input type="text" placeholder="Search bookmarks" aria-label="Search bookmarks"></label>
        <div class="d-flex flex-fill overflow-hidden">
          <ul class="tree">
            <li><span class="twisty"><svg width="12" height="12"><use href="#closed"/></svg></span><a href="#"><svg width="16" height="16"><use href="#barfolder"/></svg>Bookmarks Toolbar</a></li>
            <li><span class="twisty"><svg width="12" height="12"><use href="#opened"/></svg></span><a href="#"><svg width="16" height="16"><use href="#menufolder"/></svg>Bookmarks Menu</a></li>
            <li class="l1"><span class="twisty"><svg width="12" height="12"><use href="#closed"/></svg></span><a href="#"><svg width="16" height="16"><use href="#folder"/></svg>Bookmarks Toolbar Folder</a></li>
            <li class="divide"><hr></li>
            <li class="l1"><span class="twisty"><svg width="12" height="12"><use href="#closed"/></svg></span><a href="#"><svg width="16" height="16"><use href="#folder"/></svg>EPICS</a></li>
            <li class="l1"><span class="twisty"></span><a href="#"><svg width="16" height="16"><use href="#jl"/></svg>JLab Ecommerce : Login</a></li>
            <li class="l1"><span class="twisty"></span><a href="#"><svg width="16" height="16"><use href="#google"/></svg>Google</a></li>
            <li class="l1"><span class="twisty"></span><a href="#"><svg width="16" height="16"><use href="#jl"/></svg>Staff Search</a></li>
            <li class="l1"><span class="twisty"></span><a href="#"><svg width="16" height="16"><use href="#logbook"/></svg>Main | Jefferson Lab Electronic Logbook</a></li>
            <li class="l1"><span class="twisty"></span><a href="#"><svg width="16" height="16"><use href="#web"/></svg>MCC Scheduling Whiteboard</a></li>
            <li class="l1"><span class="twisty"></span><a href="#"><svg width="16" height="16"><use href="#logbook"/></svg>HALOG | Jefferson Lab Electronic Logbook</a></li>
            <li class="l1"><span class="twisty"></span><a href="#"><svg width="16" height="16"><use href="#cebaf"/></svg>Program Information | cebaf2013</a></li>
            <li class="l1"><span class="twisty"></span><a href="#"><svg width="16" height="16"><use href="#logbook"/></svg>HCLOG | Jefferson Lab Electronic Logbook</a></li>
            <li class="l1"><span class="twisty"></span><a href="#"><svg width="16" height="16"><use href="#wave"/></svg>WAVE</a></li>
            <li class="l1"><span class="twisty"></span><a href="#"><svg width="16" height="16"><use href="#web"/></svg>WEDM - /cs/opshome/edm/HALLA/tools/tmpwmenu</a></li>
            <li class="l1"><span class="twisty"></span><a href="#"><svg width="16" height="16"><use href="#bars"/></svg>MainMenu</a></li>
            <li class="l1"><span class="twisty"></span><a href="#"><svg width="16" height="16"><use href="#jl"/></svg>Index of /controls_web/certified</a></li>
            <li class="l1"><span class="twisty"></span><a href="#"><svg width="16" height="16"><use href="#hall"/></svg>MCC Information</a></li>
            <li class="l1"><span class="twisty"></span><a href="#"><svg width="16" height="16"><use href="#hall"/></svg>Jack Segal's Notes</a></li>
            <li class="l1"><span class="twisty"><svg width="12" height="12"><use href="#closed"/></svg></span><a href="#"><svg width="16" height="16"><use href="#folder"/></svg>Electronics</a></li>
            <li class="l1"><span class="twisty"><svg width="12" height="12"><use href="#closed"/></svg></span><a href="#"><svg width="16" height="16"><use href="#folder"/></svg>Industries</a></li>
            <li class="l1"><span class="twisty"><svg width="12" height="12"><use href="#opened"/></svg></span><a href="#"><svg width="16" height="16"><use href="#folder"/></svg>TJNAF</a></li>
            <li class="l2"><span class="twisty"></span><a href="#"><svg width="16" height="16"><use href="#jl"/></svg>Shipping and Receiving Log (Last 7 Days)</a></li>
            <li class="l2"><span class="twisty"></span><a href="#"><svg width="16" height="16"><use href="#jl"/></svg>Requisition System Home</a></li>
            <li class="l2"><span class="twisty"></span><a href="#"><svg width="16" height="16"><use href="#outlook"/></svg>Mail - segal@jlab.org</a></li>
            <li class="l2"><span class="twisty"></span><a href="#"><svg width="16" height="16"><use href="#ms"/></svg>Microsoft Office Home</a></li>
            <li class="l2"><span class="twisty"></span><a href="#"><svg width="16" height="16"><use href="#timesheet"/></svg>Timesheet</a></li>
            <li class="l2"><span class="twisty"></span><a href="#"><svg width="16" height="16"><use href="#jl"/></svg>JLab Insight Portal Login</a></li>
            <li class="l2"><span class="twisty"><svg width="12" height="12"><use href="#closed"/></svg></span><a href="#"><svg width="16" height="16"><use href="#folder"/></svg>Hall A</a></li>
            <li class="l2"><span class="twisty"><svg width="12" height="12"><use href="#closed"/></svg></span><a href="#"><svg width="16" height="16"><use href="#folder"/></svg>Hall C</a></li>
            <li class="l2"><span class="twisty"><svg width="12" height="12"><use href="#closed"/></svg></span><a href="#"><svg width="16" height="16"><use href="#folder"/></svg>CAD</a></li>
            <li class="l2"><span class="twisty"></span><a href="#"><svg width="16" height="16"><use href="#web"/></svg>Cafeteria Menu</a></li>
            <li class="l2"><span class="twisty"></span><a href="#"><svg width="16" height="16"><use href="#web"/></svg>Jefferson Lab Guard System - Find People -</a></li>
            <li class="l2"><span class="twisty"><svg width="12" height="12"><use href="#opened"/></svg></span><a href="#"><svg width="16" height="16"><use href="#folder"/></svg>Other</a></li>
            <li class="l3"><span class="twisty"></span><a href="#"><svg width="16" height="16"><use href="#jl"/></svg>Cafe Menu</a></li>
            <li class="l3"><span class="twisty"></span><a href="#"><svg width="16" height="16"><use href="#jlblack"/></svg>Credit Card Page</a></li>
            <li class="l3"><span class="twisty"></span><a href="#"><svg width="16" height="16"><use href="#web"/></svg>DOE Complex-wide Material Exchange</a></li>
            <li class="l3"><span class="twisty"></span><a href="#"><svg width="16" height="16"><use href="#jl"/></svg>EH&amp;S Manual</a></li>
            <li class="l3"><span class="twisty"></span><a href="#"><svg width="16" height="16"><use href="#jl"/></svg>Emergency Management Home Page</a></li>
            <li class="l3"><span class="twisty"></span><a href="#"><svg width="16" height="16"><use href="#web"/></svg>ENGnetBASE Engineering Handbooks Online</a></li>
          </ul>
          <div class="scroller d-flex flex-column">
            <button class="no-ui d-flex align-items-center justify-content-center" aria-label="Scroll up"><svg width="9" height="6"><path d="m1 5 3.500-3.500L8 5" fill="none" stroke="#555" stroke-width="1.700"/></svg></button>
            <div class="thumb"></div>
            <button class="no-ui mt-auto d-flex align-items-center justify-content-center" aria-label="Scroll down"><svg width="9" height="6"><path d="m1 1 3.500 3.500L8 1" fill="none" stroke="#555" stroke-width="1.700"/></svg></button>
          </div>
        </div>
      </aside>

      <div class="page d-flex justify-content-between flex-fill">
        <section class="edm">
          <h1 class="edm-title">MQ171L</h1>
          <div class="d-flex flex-fill">
            <div class="edm-left">
              <div class="sig d-flex justify-content-between"><span>Setpoint</span><span class="unit unit-far">Amps</span></div>
              <div class="sig d-flex justify-content-between"><span>Readback</span><span class="unit unit-far">Amps</span></div>
              <div class="sig d-flex justify-content-between"><span>Output Setpoint</span><span class="unit">Amps</span></div>
              <div class="sig d-flex justify-content-between"><span>8-bit Readback</span><span class="unit">Amps</span></div>
              <div class="sig d-flex justify-content-between"><span>Tesla</span></div>
              <div class="sig d-flex justify-content-between"><span>Output Voltage</span><span class="unit">Volts</span></div>
              <div class="sig d-flex justify-content-between"><span>+ 15v Supply</span><span class="unit">Volts</span></div>
              <div class="sig d-flex justify-content-between ps-1"><span>- 15v Supply</span><span class="unit">Volts</span></div>
              <div class="sig d-flex justify-content-between ps-1"><span>+ 5v Supply</span><span class="unit">Volts</span></div>
              <div class="sig d-flex justify-content-between"><span>Delta Temperature</span><span class="unit">C</span></div>
              <div class="sig d-flex justify-content-between"><span>Pass Bank Vce</span><span class="unit">Volts</span></div>
              <div class="ctl-title caps text-center">BOX CONTROLS</div>
              <div class="ctl">
                <div class="stack"><span class="under">Main Power</span><span class="over">Main Power Off</span></div>
                <div class="stack"><span class="under">MPS Ready</span><span class="over">MPS Not Ready</span></div>
                <div class="stack"><span class="under">Remote Mode</span><span class="over">Local Mode</span></div>
                <button class="edm-btn inset caps">POWER ON</button>
                <button class="edm-btn w140 inset caps mt-1">POWER OFF/RESET</button>
                <div class="set-row d-flex"><input class="setbox" type="text" id="setp"><label class="ms-2" for="setp">Setpoint (Amps)</label></div>
                <div class="d-flex"><span class="setbox invisible"></span><span class="ms-2">ReadBack (Amps)</span></div>
                <div class="pol-row d-flex align-items-center">
                  <div><button class="edm-btn">Positive Polarity</button><button class="edm-btn mt-1">Negative Polarity</button></div>
                  <div class="stack pol"><span class="under">Negative Polarity</span><span class="over">Positive Polarity</span></div>
                </div>
              </div>
            </div>
            <div class="edm-mid">
              <div class="std caps">STANDARDIZING</div>
              <div class="colhead pt-4">Interlocks</div>
              <div class="alarm">Spare Interlock</div>
              <div class="alarm">One Transistor Fault</div>
              <div class="alarm">Sum Interlock</div>
              <div class="alarm">DC Overcurrent (OCP)</div>
              <div class="alarm">DC Overload</div>
              <div class="alarm">Regulation Module Failure</div>
              <div class="alarm">Max Current Set</div>
              <div class="alarm">Phase/Unbalance Failure</div>
              <div class="alarm">MPS Waterflow Failure</div>
              <div class="alarm">Cryogenic Fault</div>
              <div class="alarm">Thermal Breaker/Fuses</div>
              <div class="alarm">MPS Overtemperature</div>
              <div class="alarm">Panic Button/Door Switch</div>
              <div class="alarm">Magnet Overtemperature</div>
              <div class="alarm">Safety System</div>
              <div class="alarm inset">Magnet Overtemperature Interlock Failure</div>
            </div>
            <div class="edm-right d-flex flex-column">
              <div class="colhead">Comm Status</div>
              <div class="alarm">Comm Error</div>
              <div class="alarm">No Response</div>
              <div class="alarm">RX Data Buffer Overrun</div>
              <div class="alarm">Wrong Address Responded</div>
              <div class="alarm">RX Data Corrupted</div>
              <div class="alarm">Bad RX Termination</div>
              <div class="alarm">Command RX Error</div>
              <div class="alarm">Setpoint Error</div>
              <div class="alarm">Polarity Stuck</div>
              <div class="alarm">Polarity Change in Progress</div>
              <div class="mt-auto align-self-end beat">
                <svg width="52" height="44" class="d-block ms-4"><g transform="translate(4 0)" fill="none" stroke="#000" stroke-width="2"><circle cx="22" cy="22" r="21"/><circle cx="15" cy="17.500" r="5"/><circle cx="30" cy="17.500" r="5"/><path d="M18 21q5-6 8-7M9 26q13 11 27 0"/></g></svg>
                <div class="ps-2">Heartbeat</div>
              </div>
              <button class="edm-btn w120 caps align-self-end mt-2 me-1">SCANNER RESET</button>
              <div class="pb-4"></div>
            </div>
          </div>
        </section>
        <svg width="24" height="26" fill="#f00" stroke="#f00"><path d="M23 1 17 8M1 24l6-7" fill="none"/><path d="M12 7c2-2 5-2 7-1 0 2-1 4-2 6zM5 13l6 6c-2 1-5 1-7 0 0-2 0-4 1-6z"/></svg>
      </div>
    </div>
  </main>

  <footer class="taskbar d-flex align-items-center">
    <button class="no-ui tb start" aria-label="Start"><svg width="16" height="16" fill="#fff"><path d="M0 2.300 6.500 1.400v6.200H0zM7.500 1.200 16 0v7.600H7.500zM0 8.500h6.500v6.200L0 13.800zM7.500 8.500H16V16l-8.500-1.200z"/></svg></button>
    <label class="tb-search d-flex align-items-center ps-2 pe-3"><svg width="24" height="24" class="me-2"><circle cx="12" cy="12" r="9" fill="none" stroke="#111" stroke-width="2.600"/></svg><input type="text" placeholder="Type here to search" aria-label="Type here to search"><svg width="12" height="18" fill="none" stroke="#333"><rect x="3.500" y=".5" width="5" height="11" rx="1"/><path d="M1 8v6h10V8M6 14v3"/></svg></label>
    <button class="no-ui tb" aria-label="Task view"><svg width="16" height="16" fill="none" stroke="#eee" stroke-width="1.300"><path d="M1 5h9v6H1zM0 1h2v2h7V1h2M0 15h2v-2h7v2h2M14 1v3M14 6v10M12.500 5.500h3"/></svg></button>
    <button class="no-ui tb" aria-label="File Explorer"><svg width="24" height="22"><path d="M1 1h8l2 3h12v16H1z" fill="#ffd868"/><path d="M1 6h22v14H1z" fill="#ffe9a0"/><path d="M5 20v-9h14v9h-4v-5H9v5z" fill="#35a5e0"/></svg></button>
    <button class="no-ui tb" aria-label="Notepad"><svg width="24" height="24"><path d="m9 1 13 2-5 19-15-4z" fill="#9ed4dc"/><path d="m9 1 7 1-5 18-9-2z" fill="#4a93a8"/><path d="m22 3 1 17-6 3-4-2z" fill="#dfe8ea" opacity=".7"/></svg></button>
    <button class="no-ui tb tb-run tb-on" aria-label="Firefox"><svg width="24" height="24"><circle cx="12" cy="12.500" r="11" fill="url(#g-ff)"/><circle cx="11" cy="12" r="5.500" fill="#2858c8"/><path d="M4 6c3 0 4 1 6 3 4 0 4 3 0 4-2 1-1 3 2 3 3-1 3-3 5-3-1 5-7 7-11 3C4 13 3 10 4 6z" fill="#ff8a18"/></svg></button>
    <button class="no-ui tb tb-run" aria-label="Thunderbird"><svg width="24" height="24"><circle cx="12" cy="12" r="11" fill="#1c56a8"/><path d="M3 10l14-2 3 6-8 9c-6 0-9-6-9-13z" fill="#f0f4fa"/><path d="M3 10c4 5 8 5 14-2" fill="none" stroke="#90a8c8"/><path d="M7 3c9-4 17 2 15 12-3-6-7-8-15-12z" fill="#3a9ae8"/></svg></button>
    <button class="no-ui tb" aria-label="Calculator"><svg width="18" height="24"><path d="M0 0h18v24H0z" fill="#fff"/><path d="M2 2h14v4H2z" fill="#111"/><path d="M3 10h12M3 15h12M3 20h12" stroke="#111" stroke-width="2.500" stroke-dasharray="3 1.500"/></svg></button>
    <button class="no-ui tb" aria-label="WordPad"><svg width="20" height="24"><path d="M2 1h16v21H2z" fill="#b8dcf4"/><path d="M2 1h16v3H2z" fill="#3878b8"/><path d="M11 8h6M11 11h6M4 15h13M4 18h13" stroke="#4a80b8"/><text x="3" y="13" font-family="Liberation Serif" font-weight="700" font-size="10" fill="#e87820">A</text></svg></button>
    <button class="no-ui tb tb-run" aria-label="PuTTY"><svg width="24" height="24"><g stroke="#ddd"><path d="M12 1h9v8h-9zM3 11h9v8H3z" fill="#1020c0"/></g><path d="M10 10h13M1 21h13" stroke="#ccc" stroke-width="3"/><path d="m15 6-7 7 5-1-4 6 8-8-5 1z" fill="#ffe800"/></svg></button>
    <button class="no-ui tb tb-run" aria-label="X server"><svg width="24" height="24"><use href="#xlogo"/></svg></button>

    <div class="ms-auto d-flex align-items-center">
      <button class="no-ui tray me-2" aria-label="People"><svg width="16" height="16" fill="none" stroke="#fff"><circle cx="11" cy="4" r="3"/><circle cx="5" cy="8.500" r="2.500"/><path d="M1 15c0-5 7-5 8 0M9.500 9c3-3 6-1 6 2"/></svg></button>
      <button class="no-ui tray ms-1" aria-label="Hidden icons"><svg width="12" height="8" fill="none" stroke="#fff"><path d="m1 7 5-5 5 5"/></svg></button>
      <button class="no-ui tray" aria-label="Network"><svg width="18" height="16" fill="none" stroke="#fff"><path d="M6 3.500h10.500v8h-12V8M10 12v3M6 14.500h8M1.500 2.500h4v4h-4zM3.500 6.500v5"/></svg></button>
      <button class="no-ui tray" aria-label="Volume"><svg width="18" height="16" fill="none" stroke="#fff"><path d="M1.500 5.500H4L7.500 2v12L4 10.500H1.500zM10 6q1.500 2 0 4M12 4q3 4 0 8M14.500 2.500q4 5.500 0 11"/></svg></button>
      <div class="clock">6:59 PM<br>1/11/2020</div>
      <button class="no-ui notif" aria-label="Notifications"><svg width="16" height="16" fill="none" stroke="#fff"><path d="M.5 1.500h15v11H10l-2 2.500-2-2.500H.5z"/></svg></button>
      <span class="peek"></span>
    </div>
  </footer>
</div>
<script src="https://cdn.jsdelivr.net/npm/bootstrap@5.3.0/dist/js/bootstrap.bundle.min.js"></script>
</body>
</html>
